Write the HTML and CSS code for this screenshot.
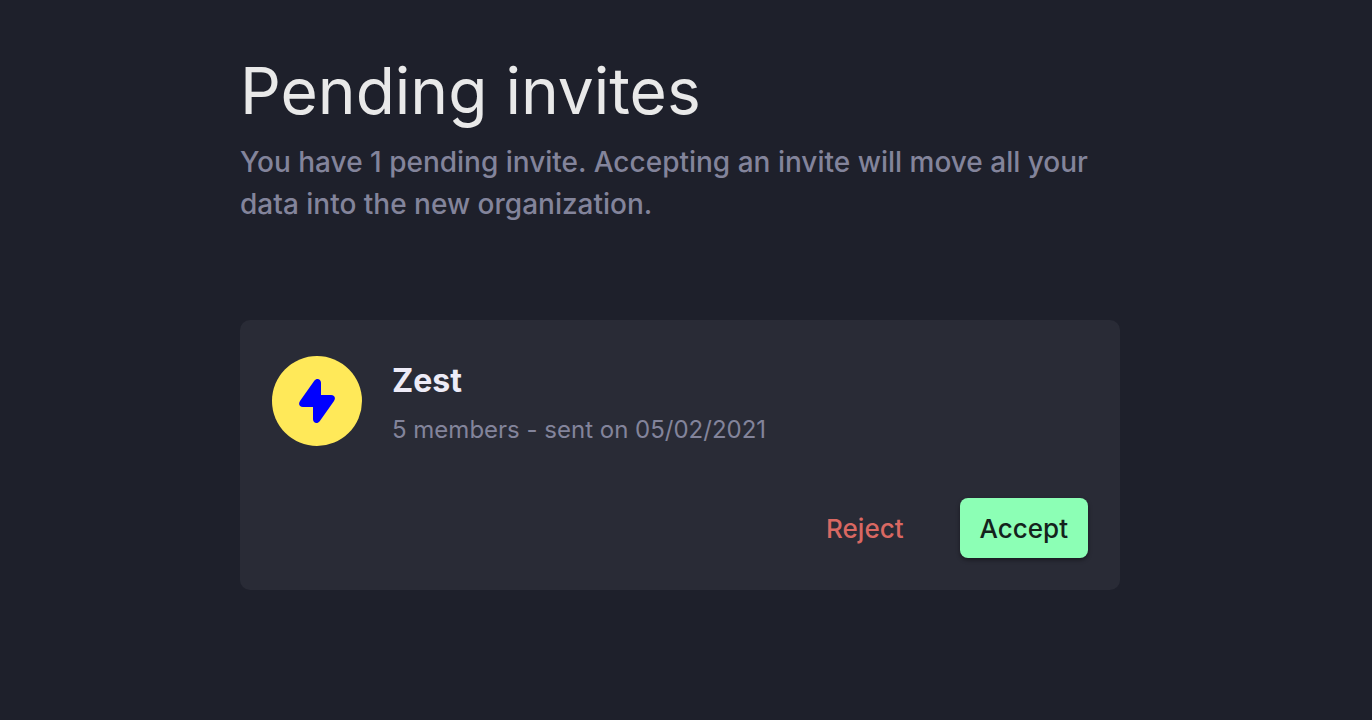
FILE: index.html
```html
<!DOCTYPE html>
<html lang="en">
<head>
<meta charset="utf-8">
<meta name="viewport" content="width=device-width, initial-scale=1">
<title>Pending invites</title>
<link rel="stylesheet" href="styles.css">
</head>
<body>
<main class="page">
  <header class="intro">
    <h1 class="title">Pending invites</h1>
    <p class="lead">You have 1 pending invite. Accepting an invite will move all your data into the new organization.</p>
  </header>
  <article class="card">
    <div class="org">
      <div class="avatar">
        <svg class="bolt" viewBox="0 0 36 44" aria-hidden="true"><path d="M15.300 1.800C17.600-1.300 22 0 22 3.800V16H32C35.600 16 37 19 35 22L20.700 42.200C18.400 45.300 14 44 14 40.200V28H4C.4 28-1 25 1 22Z"/></svg>
      </div>
      <div class="details">
        <h2 class="name">Zest</h2>
        <p class="meta">5 members - sent on 05/02/2021</p>
      </div>
    </div>
    <div class="actions">
      <button class="btn reject" type="button">Reject</button>
      <button class="btn accept" type="button">Accept</button>
    </div>
  </article>
</main>
</body>
</html>
```
FILE: styles.css
```css
* { box-sizing: border-box; }
body {
  margin: 0;
  padding-right: 12px;
  background: #1e202b;
  color: #e9e9e9;
  font-family: Inter, sans-serif;
}
.page {
  max-width: 880px;
  margin: 0 auto;
  padding: 51px 0;
}
.intro { margin-bottom: 95px; }
.title {
  margin: 0 0 10px;
  font-size: 64px;
  line-height: 80px;
  font-weight: 400;
}
.lead {
  margin: 0;
  color: #83849b;
  font-size: 28px;
  line-height: 42px;
  font-weight: 500;
}
.card {
  padding: 36px 32px 32px;
  border-radius: 10px;
  background: #292b36;
}
.org { display: flex; gap: 30px; }
.avatar {
  display: grid;
  flex: none;
  place-items: center;
  width: 90px;
  height: 90px;
  border-radius: 50%;
  background: #ffe959;
}
.bolt { width: 36px; height: 44px; fill: #0000ff; }
.name {
  margin: 0 0 6px;
  color: #edebf7;
  font-size: 32px;
  line-height: 50px;
  font-weight: 700;
}
.meta {
  margin: 0;
  color: #83849b;
  font-size: 24px;
  line-height: 36px;
}
.actions {
  display: flex;
  justify-content: flex-end;
  gap: 36px;
  margin-top: 50px;
}
.btn {
  height: 60px;
  padding: 2px 20px 0;
  border: 0;
  border-radius: 8px;
  background: none;
  font: 500 26px/40px Inter, sans-serif;
}
.reject { color: #d96862; }
.accept {
  background: #8cffb5;
  color: #14231c;
  box-shadow: 0 2px 4px rgba(0, 0, 0, 0.4);
}
```
